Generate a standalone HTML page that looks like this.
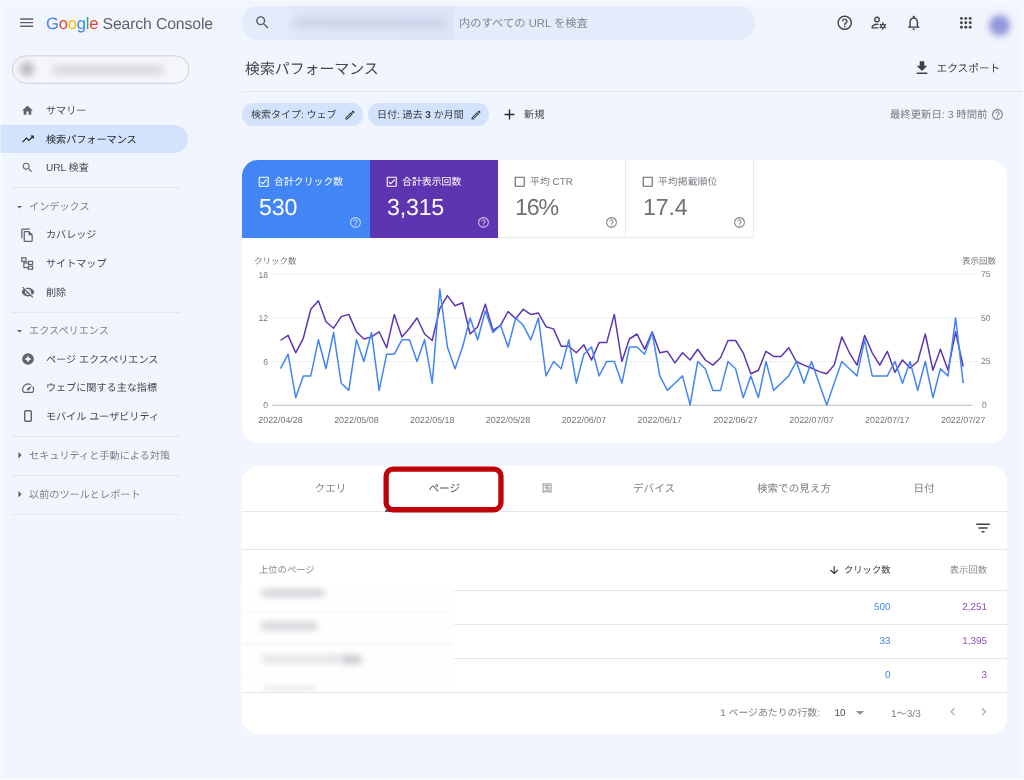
<!DOCTYPE html>
<html lang="ja">
<head>
<meta charset="utf-8">
<title>Google Search Console</title>
<style>
*{box-sizing:border-box;margin:0;padding:0}
html,body{width:1024px;height:780px;overflow:hidden;background:#f1f5fd}
body{font-family:"Liberation Sans","Noto Sans CJK JP",sans-serif;color:#3c4043;position:relative;-webkit-font-smoothing:antialiased;text-rendering:geometricPrecision}
.a{position:absolute;white-space:nowrap}
.t{position:absolute;white-space:nowrap;line-height:20px;height:20px;margin-top:-10px}
svg{position:absolute;overflow:visible}
.nav{font-size:10.100px;color:#44484c;margin-top:-8.200px}
.sec{font-size:10.100px;color:#7b7f84;letter-spacing:.05px;margin-top:-8.100px}
.hr{position:absolute;height:1px;background:#e5e6e9}
.card{position:absolute;background:#fff;border-radius:16px}
.tab{font-size:10.600px;color:#7d8186;text-align:center;width:100px;margin-left:-50px}
.r{text-align:right}
.blur{position:absolute;border-radius:6px;filter:blur(3px)}
</style>
</head>
<body>
<div id="root" style="position:absolute;left:0;top:0;width:1024px;height:780px;will-change:transform;overflow:hidden">
<!-- ===== top bar ===== -->
<svg class="ic" style="left:17.850px;top:14.250px" width="17.300" height="17.300" viewBox="0 0 24 24"><path fill="#5f6368" d="M3 18h18v-2H3v2zm0-5h18v-2H3v2zm0-7v2h18V6H3z"/></svg>
<div class="t" id="logo" style="left:46px;top:24px;font-size:16.600px;letter-spacing:-.2px;color:#5f6368"><span style="color:#4285f4">G</span><span style="color:#ea4335">o</span><span style="color:#fbbc05">o</span><span style="color:#4285f4">g</span><span style="color:#34a853">l</span><span style="color:#ea4335">e</span><span id="sc" style="font-size:15.800px;letter-spacing:-.15px"> Search Console</span></div>

<div class="a" style="left:242px;top:6px;width:513px;height:34px;border-radius:17px;background:#e4ecfc"></div>
<svg style="left:254px;top:14px" width="17" height="17" viewBox="0 0 24 24"><path fill="#5f6368" d="M15.5 14h-.79l-.28-.27C15.41 12.59 16 11.11 16 9.5 16 5.910 13.09 3 9.5 3S3 5.91 3 9.5 5.91 16 9.5 16c1.61 0 3.09-.59 4.23-1.57l.27.28v.79l5 4.99L20.49 19l-4.99-5zm-6 0C7.01 14 5 11.99 5 9.5S7.01 5 9.5 5 14 7.01 14 9.5 11.990 14 9.5 14z"/></svg>
<div class="a" style="left:281px;top:6px;width:172.500px;height:34px;background:linear-gradient(90deg,rgba(221,229,248,0),#dfe6f8 12%,#dde5f8)"></div>
<div class="blur" style="left:292px;top:19px;width:155px;height:8px;background:#c0c8de;opacity:.7;filter:blur(4px)"></div>
<div class="t" style="left:459px;top:24px;font-size:11.300px;color:#82868c">内のすべての URL を検査</div>

<svg style="left:836.250px;top:14.350px" width="17.500" height="17.500" viewBox="0 0 24 24"><path fill="#444746" d="M11 18h2v-2h-2v2zm1-16C6.48 2 2 6.48 2 12s4.48 10 10 10 10-4.48 10-10S17.52 2 12 2zm0 18c-4.41 0-8-3.59-8-8s3.59-8 8-8 8 3.59 8 8-3.59 8-8 8zm0-14c-2.21 0-4 1.79-4 4h2c0-1.1.9-2 2-2s2 .9 2 2c0 2-3 1.75-3 5h2c0-2.25 3-2.5 3-5 0-2.21-1.79-4-4-4z"/></svg>
<svg style="left:870.300px;top:14.400px" width="17.600" height="17.600" viewBox="0 0 24 24"><g fill="none" stroke="#444746" stroke-width="1.900"><circle cx="9.500" cy="7.500" r="3.100"/><path d="M11.500 14.200c-.6-.1-1.300-.2-2-.2-3 0-6.500 1.500-6.500 3.700V19h8.500"/><circle cx="17.500" cy="16.500" r="2.300"/></g><g stroke="#444746" stroke-width="2.100"><path d="M17.500 11.600v2M17.500 19.400v2M13.260 14.050l1.730 1M20.010 17.950l1.730 1M13.260 18.950l1.730-1M20.010 15.050l1.730-1"/></g></svg>
<svg style="left:904.650px;top:14.150px" width="17.500" height="17.500" viewBox="0 0 24 24"><path fill="#444746" d="M12 22c1.1 0 2-.9 2-2h-4c0 1.1.9 2 2 2zm6-6v-5c0-3.070-1.630-5.640-4.500-6.320V4c0-.83-.67-1.500-1.500-1.500s-1.500 .670-1.500 1.500v.68C7.640 5.360 6 7.920 6 11v5l-2 2v1h16v-1l-2-2zm-2 1H8v-6c0-2.480 1.510-4.500 4-4.500s4 2.020 4 4.500v6z"/></svg>
<svg style="left:957px;top:13.900px" width="17.600" height="17.600" viewBox="0 0 24 24"><g fill="#444746"><circle cx="6" cy="6" r="2"/><circle cx="12" cy="6" r="2"/><circle cx="18" cy="6" r="2"/><circle cx="6" cy="12" r="2"/><circle cx="12" cy="12" r="2"/><circle cx="18" cy="12" r="2"/><circle cx="6" cy="18" r="2"/><circle cx="12" cy="18" r="2"/><circle cx="18" cy="18" r="2"/></g></svg>
<div class="a" style="left:989px;top:15.200px;width:20.500px;height:20.500px;border-radius:50%;background:#9498dc;filter:blur(3.200px)"></div>

<!-- ===== sidebar ===== -->
<svg style="left:0;top:0" width="200" height="100" viewBox="0 0 200 100"><rect x="12.300" y="55.900" width="176.700" height="27.400" rx="13.700" fill="#f5f6f9" stroke="#cdd0d6" stroke-width="1"/></svg>
<div class="a" style="left:20px;top:62px;width:14px;height:14px;border-radius:50%;background:#b9babd;filter:blur(3.400px)"></div>
<div class="blur" style="left:52px;top:65.500px;width:112px;height:8px;background:#d3d4d7;filter:blur(3.800px)"></div>

<div class="a" style="left:0;top:125px;width:188px;height:28px;border-radius:0 14px 14px 0;background:#d3e3fd"></div>

<svg style="left:21px;top:104px" width="13" height="13" viewBox="0 0 24 24"><path fill="#5f6368" d="M10 20v-6h4v6h5v-8h3L12 3 2 12h3v8z"/></svg>
<div class="t nav" style="left:46px;top:110px">サマリー</div>
<svg style="left:21px;top:132px" width="14" height="14" viewBox="0 0 24 24"><path fill="#202124" d="M16 6l2.290 2.290-4.880 4.880-4-4L2 16.590 3.410 18l6-6 4 4 6.300-6.290L22 12V6z"/></svg>
<div class="t nav" style="left:46px;top:139px;color:#202124">検索パフォーマンス</div>
<svg style="left:21px;top:161px" width="13" height="13" viewBox="0 0 24 24"><path fill="#5f6368" d="M15.5 14h-.79l-.28-.27C15.41 12.59 16 11.11 16 9.5 16 5.910 13.09 3 9.5 3S3 5.91 3 9.5 5.91 16 9.5 16c1.61 0 3.09-.59 4.23-1.57l.27.28v.79l5 4.99L20.49 19l-4.99-5zm-6 0C7.01 14 5 11.99 5 9.5S7.01 5 9.5 5 14 7.01 14 9.5 11.990 14 9.5 14z"/></svg>
<div class="t nav" style="left:46px;top:167.500px">URL 検査</div>
<div class="hr" style="left:12px;top:187px;width:168px"></div>

<svg style="left:16.500px;top:205.500px" width="5" height="2.500" viewBox="0 0 10 5"><path fill="#5f6368" d="M0 0h10L5 5z"/></svg>
<div class="t sec" style="left:29px;top:206px">インデックス</div>
<svg style="left:19.900px;top:227.800px" width="14.600" height="14.600" viewBox="0 0 24 24"><path fill="#5f6368" d="M16 1H4c-1.100 0-2 .9-2 2v14h2V3h12V1zm-1 4H8c-1.100 0-1.990 .9-1.990 2L6 21c0 1.100 .890 2 1.990 2H19c1.100 0 2-.9 2-2V11l-6-6zM8 21V7h6v5h5v9H8z"/></svg>
<div class="t nav" style="left:46px;top:234.500px">カバレッジ</div>
<svg style="left:20.300px;top:256.200px" width="14.400" height="14.400" viewBox="0 0 24 24"><g fill="none" stroke="#5f6368" stroke-width="2"><rect x="3" y="3" width="7" height="6"/><rect x="14" y="9" width="7" height="5"/><rect x="14" y="17" width="7" height="5"/><path d="M6.500 9v10.500H14M6.500 11.500H14"/></g></svg>
<div class="t nav" style="left:46px;top:263px">サイトマップ</div>
<svg style="left:21px;top:285px" width="14" height="14" viewBox="0 0 24 24"><path fill="#5f6368" d="M12 7c2.760 0 5 2.240 5 5 0 .65-.13 1.260-.36 1.830l2.920 2.920c1.510-1.260 2.700-2.890 3.430-4.750-1.730-4.390-6-7.500-11-7.500-1.400 0-2.740 .25-3.980 .7l2.160 2.160C10.740 7.130 11.350 7 12 7zM2 4.270l2.280 2.280 .46 .46C3.080 8.300 1.780 10.020 1 12c1.730 4.390 6 7.500 11 7.500 1.550 0 3.030-.3 4.380-.84l.42 .42L19.730 22 21 20.730 3.270 3 2 4.270zM7.530 9.800l1.550 1.550c-.05 .21-.08 .43-.08 .65 0 1.660 1.340 3 3 3 .22 0 .44-.03 .65-.08l1.550 1.550c-.67 .33-1.410 .53-2.200 .53-2.760 0-5-2.240-5-5 0-.79 .2-1.530 .53-2.200zm4.310-.78l3.150 3.150 .02-.16c0-1.660-1.340-3-3-3l-.17 .01z"/></svg>
<div class="t nav" style="left:46px;top:292px">削除</div>
<div class="hr" style="left:12px;top:312px;width:168px"></div>

<svg style="left:16.500px;top:330px" width="5" height="2.500" viewBox="0 0 10 5"><path fill="#5f6368" d="M0 0h10L5 5z"/></svg>
<div class="t sec" style="left:29px;top:330.500px">エクスペリエンス</div>
<svg style="left:20.700px;top:352.400px" width="14" height="14" viewBox="0 0 24 24"><circle cx="12" cy="12" r="10" fill="#5f6368"/><path fill="#f1f5fd" d="M12 5.800Q13 11 18.200 12Q13 13 12 18.200Q11 13 5.800 12Q11 11 12 5.800z"/></svg>
<div class="t nav" style="left:46px;top:359px">ページ エクスペリエンス</div>
<svg style="left:20.600px;top:380.600px" width="14.300" height="14.300" viewBox="0 0 24 24"><path fill="#5f6368" d="M20.380 8.570l-1.230 1.850a8 8 0 0 1-.22 7.580H5.070A8 8 0 0 1 15.580 6.850l1.850-1.230A10 10 0 0 0 3.350 19a2 2 0 0 0 1.720 1h13.850a2 2 0 0 0 1.740-1 10 10 0 0 0-.27-10.440zm-9.790 6.840a2 2 0 0 0 2.830 0l5.660-8.490-8.490 5.660a2 2 0 0 0 0 2.830z"/></svg>
<div class="t nav" style="left:46px;top:387.500px">ウェブに関する主な指標</div>
<svg style="left:23.700px;top:410.400px" width="8" height="12" viewBox="0 0 8 12"><rect x=".7" y=".7" width="6.600" height="10.600" rx="1.200" fill="none" stroke="#5f6368" stroke-width="1.400"/></svg>
<div class="t nav" style="left:46px;top:416px">モバイル ユーザビリティ</div>
<div class="hr" style="left:12px;top:436px;width:168px"></div>

<svg style="left:18px;top:452.300px" width="4" height="6.500" viewBox="0 0 5 10"><path fill="#5f6368" d="M0 0v10l5-5z"/></svg>
<div class="t sec" style="left:29px;top:455px">セキュリティと手動による対策</div>
<div class="hr" style="left:12px;top:475px;width:168px"></div>
<svg style="left:18px;top:491.300px" width="4" height="6.500" viewBox="0 0 5 10"><path fill="#5f6368" d="M0 0v10l5-5z"/></svg>
<div class="t sec" style="left:29px;top:494px">以前のツールとレポート</div>
<div class="hr" style="left:12px;top:514px;width:168px"></div>

<!-- ===== page header ===== -->
<div class="t" style="left:245px;top:70px;font-size:14.900px;color:#44474b">検索パフォーマンス</div>
<svg style="left:912.900px;top:59.200px" width="18" height="18" viewBox="0 0 24 24"><path fill="#3c4043" d="M19 9h-4V3H9v6H5l7 7 7-7zM5 18v2h14v-2H5z"/></svg>
<div class="t" style="left:936.500px;top:68.800px;font-size:10.700px;color:#3c4043">エクスポート</div>
<div class="hr" style="left:242px;top:91px;width:782px;background:#e4e7ee"></div>

<div class="a" style="left:242px;top:103px;width:120.800px;height:22.500px;border-radius:11.250px;background:#d3e3fd"></div>
<div class="t" style="left:251px;top:116px;font-size:10px;color:#3c4043">検索タイプ: ウェブ</div>
<svg style="left:343.700px;top:108.600px" width="12" height="12" viewBox="0 0 24 24"><path fill="#33363a" d="M14.060 9.020l.92 .92L5.920 19H5v-.92l9.060-9.060M17.660 3c-.25 0-.51 .1-.7 .29l-1.830 1.830 3.750 3.750 1.830-1.830c.39-.39 .39-1.020 0-1.410l-2.340-2.340c-.2-.2-.45-.29-.71-.29zm-3.600 3.190L3 17.250V21h3.750L17.810 9.940l-3.750-3.750z"/></svg>
<div class="a" style="left:368.400px;top:103px;width:120.600px;height:22.500px;border-radius:11.250px;background:#d3e3fd"></div>
<div class="t" style="left:377px;top:116px;font-size:10px;color:#3c4043">日付: 過去 <b>3</b> か月間</div>
<svg style="left:470.200px;top:108.600px" width="12" height="12" viewBox="0 0 24 24"><path fill="#33363a" d="M14.060 9.020l.92 .92L5.920 19H5v-.92l9.060-9.060M17.660 3c-.25 0-.51 .1-.7 .29l-1.830 1.830 3.750 3.750 1.830-1.830c.39-.39 .39-1.020 0-1.410l-2.340-2.340c-.2-.2-.45-.29-.71-.29zm-3.600 3.190L3 17.250V21h3.750L17.810 9.940l-3.750-3.750z"/></svg>
<svg style="left:500.600px;top:105.600px" width="17" height="17" viewBox="0 0 24 24"><path fill="#26282b" d="M19 13h-6v6h-2v-6H5v-2h6V5h2v6h6v2z"/></svg>
<div class="t" style="left:524px;top:116px;font-size:10.200px;color:#3c4043">新規</div>
<div class="t r" style="right:36.500px;top:116px;font-size:10.400px;color:#777b80">最終更新日: 3 時間前</div>
<svg style="left:991.200px;top:108.300px" width="13" height="13" viewBox="0 0 24 24"><path fill="#80868b" d="M11 18h2v-2h-2v2zm1-16C6.48 2 2 6.48 2 12s4.48 10 10 10 10-4.48 10-10S17.52 2 12 2zm0 18c-4.41 0-8-3.59-8-8s3.59-8 8-8 8 3.59 8 8-3.59 8-8 8zm0-14c-2.21 0-4 1.79-4 4h2c0-1.1.9-2 2-2s2 .9 2 2c0 2-3 1.750-3 5h2c0-2.250 3-2.500 3-5 0-2.210-1.790-4-4-4z"/></svg>

<!-- ===== chart card ===== -->
<div class="card" style="left:242px;top:160px;width:765px;height:283px"></div>
<div class="a" style="left:242px;top:160px;width:128px;height:78px;background:#4285f4;border-radius:16px 0 0 0"></div>
<div class="a" style="left:370px;top:160px;width:128px;height:78px;background:#5e35b1"></div>
<div class="a" style="left:498px;top:160px;width:128px;height:78px;border-right:1px solid #e8eaed;border-bottom:1px solid #e8eaed"></div>
<div class="a" style="left:626px;top:160px;width:128px;height:78px;border-right:1px solid #e8eaed;border-bottom:1px solid #e8eaed"></div>

<svg style="left:257.400px;top:175.300px" width="13.500" height="13.500" viewBox="0 0 24 24"><path fill="#fff" d="M19 3H5c-1.110 0-2 .9-2 2v14c0 1.100 .890 2 2 2h14c1.110 0 2-.9 2-2V5c0-1.100-.890-2-2-2zm0 16H5V5h14v14zM17.990 9l-1.410-1.420-6.590 6.590-2.580-2.570-1.420 1.410 4 3.990z"/></svg>
<div class="t" style="left:274px;top:183.200px;font-size:9.900px;color:#fff">合計クリック数</div>
<div class="t" style="left:259px;top:207px;letter-spacing:-.2px;font-size:23.200px;color:#fff;line-height:30px;height:30px;margin-top:-15px">530</div>
<svg style="left:349px;top:216.100px" width="13" height="13" viewBox="0 0 24 24"><path fill="#fff" opacity=".65" d="M11 18h2v-2h-2v2zm1-16C6.48 2 2 6.48 2 12s4.48 10 10 10 10-4.48 10-10S17.52 2 12 2zm0 18c-4.41 0-8-3.59-8-8s3.59-8 8-8 8 3.59 8 8-3.59 8-8 8zm0-14c-2.21 0-4 1.79-4 4h2c0-1.1.9-2 2-2s2 .9 2 2c0 2-3 1.750-3 5h2c0-2.250 3-2.500 3-5 0-2.210-1.790-4-4-4z"/></svg>

<svg style="left:385.400px;top:175.300px" width="13.500" height="13.500" viewBox="0 0 24 24"><path fill="#fff" d="M19 3H5c-1.110 0-2 .9-2 2v14c0 1.100 .890 2 2 2h14c1.110 0 2-.9 2-2V5c0-1.100-.890-2-2-2zm0 16H5V5h14v14zM17.990 9l-1.410-1.420-6.590 6.590-2.580-2.570-1.420 1.410 4 3.990z"/></svg>
<div class="t" style="left:402px;top:183.200px;font-size:9.900px;color:#fff">合計表示回数</div>
<div class="t" style="left:387px;top:207px;letter-spacing:-.2px;font-size:23.200px;color:#fff;line-height:30px;height:30px;margin-top:-15px">3,315</div>
<svg style="left:477px;top:216.100px" width="13" height="13" viewBox="0 0 24 24"><path fill="#fff" opacity=".65" d="M11 18h2v-2h-2v2zm1-16C6.48 2 2 6.48 2 12s4.48 10 10 10 10-4.48 10-10S17.52 2 12 2zm0 18c-4.41 0-8-3.59-8-8s3.59-8 8-8 8 3.59 8 8-3.59 8-8 8zm0-14c-2.21 0-4 1.79-4 4h2c0-1.1.9-2 2-2s2 .9 2 2c0 2-3 1.750-3 5h2c0-2.250 3-2.500 3-5 0-2.210-1.790-4-4-4z"/></svg>

<svg style="left:513.400px;top:175.300px" width="13.500" height="13.500" viewBox="0 0 24 24"><path fill="#5f6368" d="M19 5v14H5V5h14m0-2H5c-1.100 0-2 .9-2 2v14c0 1.100 .9 2 2 2h14c1.100 0 2-.9 2-2V5c0-1.100-.9-2-2-2z"/></svg>
<div class="t" style="left:530px;top:183.200px;font-size:9.900px;color:#777b80">平均 CTR</div>
<div class="t" style="left:515px;top:207px;letter-spacing:-1.2px;font-size:23.200px;color:#6e7276;line-height:30px;height:30px;margin-top:-15px">16%</div>
<svg style="left:605px;top:216.100px" width="13" height="13" viewBox="0 0 24 24"><path fill="#80868b" d="M11 18h2v-2h-2v2zm1-16C6.48 2 2 6.48 2 12s4.48 10 10 10 10-4.48 10-10S17.52 2 12 2zm0 18c-4.41 0-8-3.59-8-8s3.59-8 8-8 8 3.59 8 8-3.59 8-8 8zm0-14c-2.21 0-4 1.79-4 4h2c0-1.1.9-2 2-2s2 .9 2 2c0 2-3 1.750-3 5h2c0-2.250 3-2.500 3-5 0-2.210-1.790-4-4-4z"/></svg>

<svg style="left:641.400px;top:175.300px" width="13.500" height="13.500" viewBox="0 0 24 24"><path fill="#5f6368" d="M19 5v14H5V5h14m0-2H5c-1.100 0-2 .9-2 2v14c0 1.100 .9 2 2 2h14c1.100 0 2-.9 2-2V5c0-1.100-.9-2-2-2z"/></svg>
<div class="t" style="left:658px;top:183.200px;font-size:9.900px;color:#777b80">平均掲載順位</div>
<div class="t" style="left:643px;top:207px;letter-spacing:-.2px;font-size:23.200px;color:#6e7276;line-height:30px;height:30px;margin-top:-15px">17.4</div>
<svg style="left:733px;top:216.100px" width="13" height="13" viewBox="0 0 24 24"><path fill="#80868b" d="M11 18h2v-2h-2v2zm1-16C6.48 2 2 6.48 2 12s4.48 10 10 10 10-4.48 10-10S17.52 2 12 2zm0 18c-4.41 0-8-3.59-8-8s3.59-8 8-8 8 3.59 8 8-3.59 8-8 8zm0-14c-2.21 0-4 1.79-4 4h2c0-1.1.9-2 2-2s2 .9 2 2c0 2-3 1.750-3 5h2c0-2.250 3-2.500 3-5 0-2.210-1.790-4-4-4z"/></svg>

<!-- chart -->
<svg style="left:0;top:0" width="1024" height="780" viewBox="0 0 1024 780">
<g stroke="#eff0f2" stroke-width="1"><path d="M272 274.500H977M272 318H977M272 361.500H977"/></g>
<path d="M272 405.300H972" stroke="#b6b9bd" stroke-width="1.100"/>
<polyline fill="none" stroke="#5e35b1" stroke-width="1.500" stroke-linejoin="round" points="280.5,340.5 288.1,335.4 295.7,352.8 303.3,338.3 310.8,309.3 318.4,300.7 326.0,321.7 333.6,328.2 341.2,316.6 348.8,314.4 356.4,331.8 363.9,339.0 371.5,336.9 379.1,331.8 386.7,347.7 394.3,314.4 401.9,336.9 409.5,328.2 417.0,318.0 424.6,334.0 432.2,340.5 439.8,308.6 447.4,295.6 455.0,305.7 462.6,302.8 470.1,334.0 477.7,326.7 485.3,304.3 492.9,330.3 500.5,325.3 508.1,311.5 515.7,318.8 523.2,309.3 530.8,314.4 538.4,313.0 546.0,326.7 553.6,328.9 561.2,346.3 568.8,346.3 576.3,352.8 583.9,344.8 591.5,360.0 599.1,342.6 606.7,342.6 614.3,314.4 621.9,361.5 629.4,339.0 637.0,334.0 644.6,349.2 652.2,331.8 659.8,352.8 667.4,351.3 674.9,362.9 682.5,352.8 690.1,360.0 697.7,349.2 705.3,360.0 712.9,365.1 720.5,357.8 728.0,340.5 735.6,340.5 743.2,352.8 750.8,373.8 758.4,370.2 766.0,351.3 773.6,356.4 781.1,356.4 788.7,347.7 796.3,361.5 803.9,365.1 811.5,368.0 819.1,371.6 826.7,373.8 834.2,365.1 841.8,336.9 849.4,352.8 857.0,365.1 864.6,335.4 872.2,352.8 879.8,365.1 887.3,351.3 894.9,372.3 902.5,360.0 910.1,368.0 917.7,361.5 925.3,334.0 932.9,370.2 940.4,349.2 948.0,370.2 955.6,331.8 963.2,366.5"/>
<polyline fill="none" stroke="#4285f4" stroke-width="1.500" stroke-linejoin="round" points="280.5,368.7 288.1,354.2 295.7,397.7 303.3,375.9 310.8,375.9 318.4,339.8 326.0,368.7 333.6,332.5 341.2,383.2 348.8,390.4 356.4,339.8 363.9,361.5 371.5,332.5 379.1,390.4 386.7,354.2 394.3,354.2 401.9,339.8 409.5,339.8 417.0,361.5 424.6,339.8 432.2,383.2 439.8,289.1 447.4,347.0 455.0,368.7 462.6,347.0 470.1,318.0 477.7,339.8 485.3,310.8 492.9,332.5 500.5,325.3 508.1,347.0 515.7,318.0 523.2,325.3 530.8,339.8 538.4,318.0 546.0,375.9 553.6,361.5 561.2,368.7 568.8,339.8 576.3,383.2 583.9,354.2 591.5,347.0 599.1,375.9 606.7,361.5 614.3,361.5 621.9,383.2 629.4,347.0 637.0,347.0 644.6,354.2 652.2,332.5 659.8,375.9 667.4,390.4 674.9,383.2 682.5,375.9 690.1,404.9 697.7,361.5 705.3,368.7 712.9,390.4 720.5,390.4 728.0,361.5 735.6,368.7 743.2,397.7 750.8,375.9 758.4,397.7 766.0,361.5 773.6,390.4 781.1,383.2 788.7,375.9 796.3,361.5 803.9,383.2 811.5,361.5 819.1,383.2 826.7,404.9 834.2,383.2 841.8,361.5 849.4,368.7 857.0,375.9 864.6,339.8 872.2,375.9 879.8,375.9 887.3,375.9 894.9,361.5 902.5,383.2 910.1,361.5 917.7,390.4 925.3,361.5 932.9,397.7 940.4,368.7 948.0,375.9 955.6,318.0 963.2,383.2"/>
<g font-family="Liberation Sans, Noto Sans CJK JP, sans-serif" font-size="8.500" fill="#73777c">
<text x="254" y="264">クリック数</text>
<text x="996" y="264" text-anchor="end">表示回数</text>
<text x="268" y="277.500" text-anchor="end">18</text>
<text x="268" y="321" text-anchor="end">12</text>
<text x="268" y="364.500" text-anchor="end">6</text>
<text x="268" y="408" text-anchor="end">0</text>
<text x="981" y="277">75</text>
<text x="981" y="320.500">50</text>
<text x="981" y="364">25</text>
<text x="982" y="408">0</text>
<g text-anchor="middle" font-size="8.900">
<text x="280.500" y="423">2022/04/28</text>
<text x="356.400" y="423">2022/05/08</text>
<text x="432.200" y="423">2022/05/18</text>
<text x="508" y="423">2022/05/28</text>
<text x="583.900" y="423">2022/06/07</text>
<text x="659.800" y="423">2022/06/17</text>
<text x="735.600" y="423">2022/06/27</text>
<text x="811.500" y="423">2022/07/07</text>
<text x="887.300" y="423">2022/07/17</text>
<text x="963.200" y="423">2022/07/27</text>
</g></g>
</svg>

<!-- ===== table card ===== -->
<div class="card" style="left:242px;top:466px;width:765px;height:267.800px"></div>
<div class="t tab" style="left:330.500px;top:489px">クエリ</div>
<div class="t tab" style="left:547px;top:489px">国</div>
<div class="t tab" style="left:654px;top:489px">デバイス</div>
<div class="t tab" style="left:794px;top:489px">検索での見え方</div>
<div class="t tab" style="left:924px;top:489px">日付</div>
<div class="hr" style="left:242px;top:511px;width:765px"></div>
<div class="a" style="left:385px;top:509.500px;width:40px;height:2px;background:#5a5d61"></div>
<svg style="left:0;top:0" width="1024" height="780" viewBox="0 0 1024 780"><rect x="386.150" y="469.050" width="114.800" height="40.700" rx="7" ry="7" fill="#fff" stroke="#c00008" stroke-width="5.300"/></svg>
<div class="t tab" style="left:444.300px;top:489px;color:#4a4e52">ページ</div>
<svg style="left:973.500px;top:519.200px" width="18" height="18" viewBox="0 0 24 24"><path fill="#3c4043" d="M10 18h4v-2h-4v2zM3 6v2h18V6H3zm3 7h12v-2H6v2z"/></svg>
<div class="hr" style="left:242px;top:549px;width:765px"></div>
<div class="t" style="left:259px;top:569.500px;font-size:9.300px;color:#84888d">上位のページ</div>
<svg style="left:828.050px;top:563.750px" width="12.300" height="12.300" viewBox="0 0 24 24"><path fill="#202124" d="M20 12l-1.410-1.410L13 16.170V4h-2v12.170l-5.580-5.590L4 12l8 8 8-8z"/></svg>
<div class="t r" style="right:133.500px;top:569.500px;font-size:9.300px;color:#34373b">クリック数</div>
<div class="t r" style="right:37px;top:569.500px;font-size:9.300px;color:#84888d">表示回数</div>
<div class="hr" style="left:242px;top:590px;width:765px"></div>
<div class="t r" style="right:133.500px;top:608.400px;font-size:9.900px;color:#4285f4">500</div>
<div class="t r" style="right:37px;top:608.400px;font-size:9.900px;color:#8c50c2">2,251</div>
<div class="hr" style="left:242px;top:624px;width:765px"></div>
<div class="t r" style="right:133.500px;top:642.400px;font-size:9.900px;color:#4285f4">33</div>
<div class="t r" style="right:37px;top:642.400px;font-size:9.900px;color:#8c50c2">1,395</div>
<div class="hr" style="left:242px;top:658px;width:765px"></div>
<div class="t r" style="right:133.500px;top:676.400px;font-size:9.900px;color:#4285f4">0</div>
<div class="t r" style="right:37px;top:676.400px;font-size:9.900px;color:#8c50c2">3</div>
<div class="hr" style="left:242px;top:692px;width:765px"></div>

<!-- blurred page urls -->
<div class="a" style="left:241px;top:587px;width:213px;height:103px;background:#fefefe;filter:blur(1.200px)"></div>
<div class="a" style="left:243px;top:610.500px;width:210px;height:2.500px;background:#f8f8f9;filter:blur(1.300px)"></div>
<div class="a" style="left:243px;top:643px;width:210px;height:2.500px;background:#f8f8f9;filter:blur(1.300px)"></div>
<div class="a" style="left:243px;top:675.500px;width:210px;height:2.500px;background:#f8f8f9;filter:blur(1.300px)"></div>
<div class="blur" style="left:261px;top:588.500px;width:64px;height:8px;background:#d2d4d8;filter:blur(3.400px)"></div>
<div class="blur" style="left:261px;top:621.500px;width:57px;height:8px;background:#d2d4d8;filter:blur(3.400px)"></div>
<div class="blur" style="left:262px;top:655px;width:80px;height:8px;background:#e0e2e5;filter:blur(3.400px)"></div>
<div class="blur" style="left:341px;top:654.500px;width:21px;height:9px;background:#c8cace;filter:blur(3.400px)"></div>
<div class="blur" style="left:263px;top:686.500px;width:54px;height:3px;background:#dfe1e4;filter:blur(2.500px)"></div>

<div class="t r" style="right:204px;top:714.300px;font-size:9.900px;color:#7d8186">1 ページあたりの行数:</div>
<div class="t" style="left:834.500px;top:714.300px;font-size:9.900px;color:#4a4e52">10</div>
<svg style="left:855.800px;top:710.500px" width="8" height="4" viewBox="0 0 10 5"><path fill="#8f949a" d="M0 0h10L5 5z"/></svg>
<div class="t" style="left:891px;top:714.500px;font-size:10.100px;color:#7d8186">1〜3/3</div>
<svg style="left:945.300px;top:704.100px" width="15.400" height="15.400" viewBox="0 0 24 24"><path fill="#a8adb3" d="M15.410 7.410L14 6l-6 6 6 6 1.410-1.410L10.830 12z"/></svg>
<svg style="left:976.300px;top:704.100px" width="15.400" height="15.400" viewBox="0 0 24 24"><path fill="#a8adb3" d="M10 6L8.590 7.410 13.170 12l-4.580 4.590L10 18l6-6z"/></svg>
<div class="a" style="left:0;top:0;width:1024px;height:780px;box-shadow:inset 0 0 2px 1px rgba(255,255,255,.5);pointer-events:none"></div>
<div class="a" style="left:0;top:777px;width:1024px;height:3px;background:linear-gradient(180deg,rgba(255,255,255,0),rgba(255,255,255,.9))"></div>
</div>
</body>
</html>
